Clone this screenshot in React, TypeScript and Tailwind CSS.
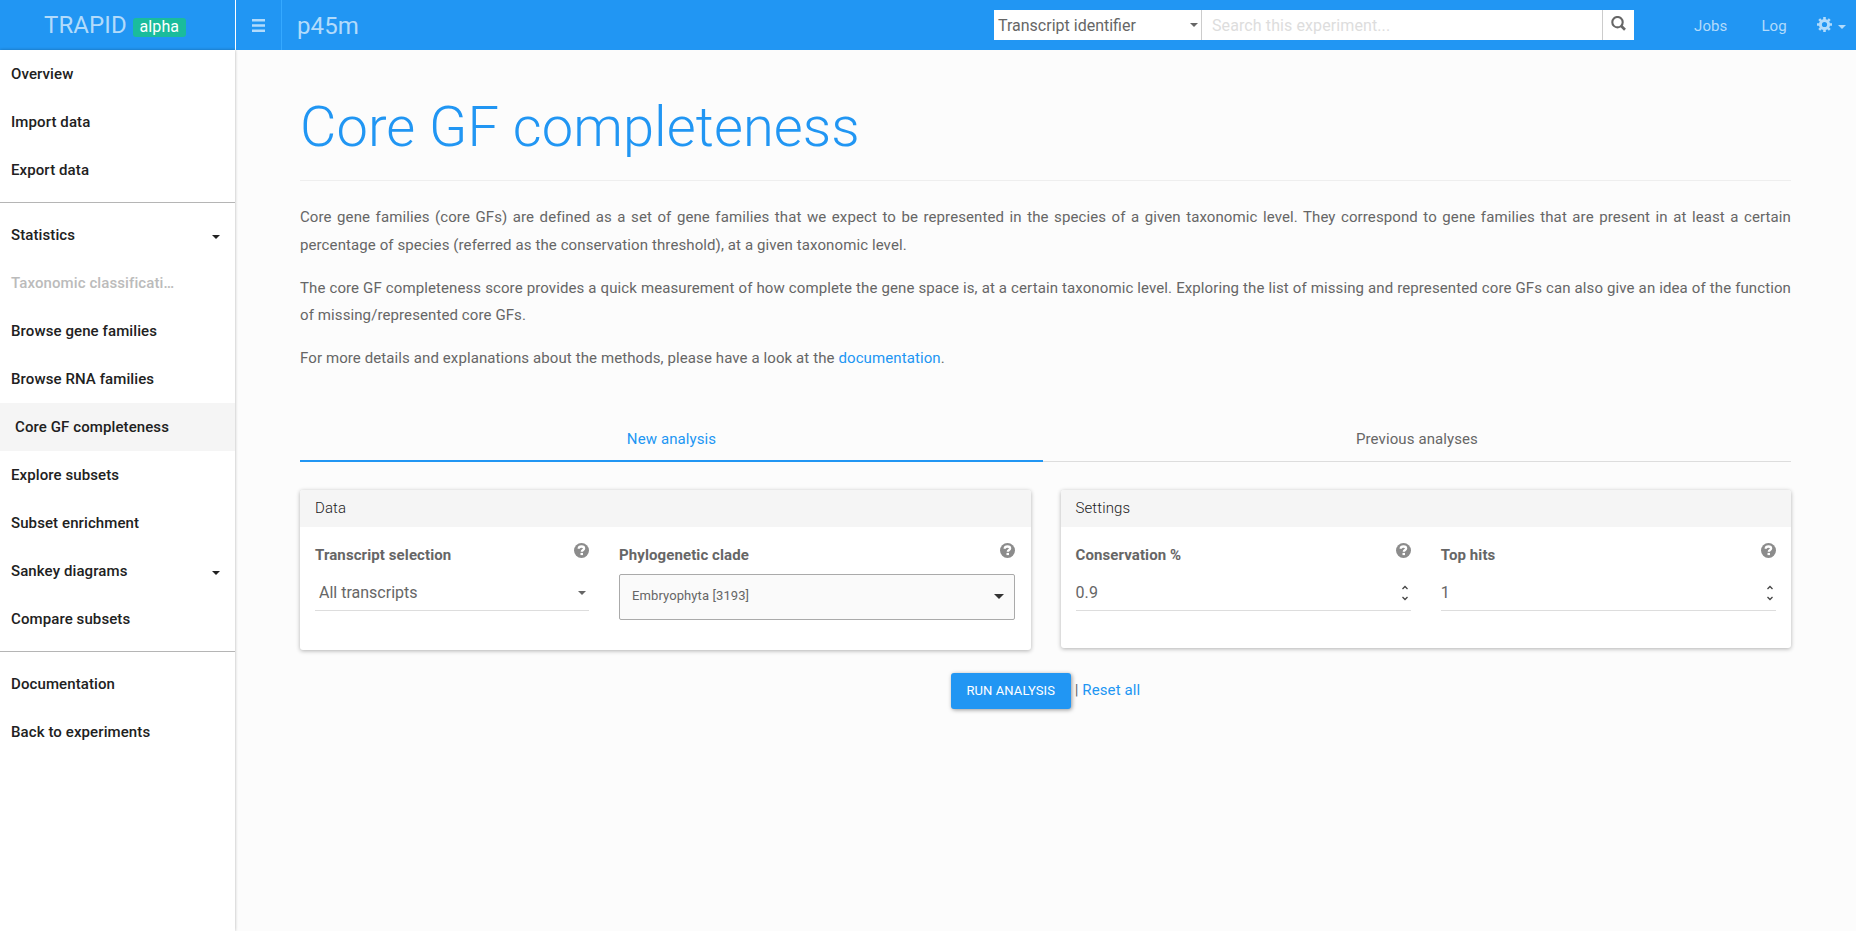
import type { ReactNode } from "react";

type Item = { label: string; caret?: boolean; active?: boolean; disabled?: boolean };

const groups: Item[][] = [
  [{ label: "Overview" }, { label: "Import data" }, { label: "Export data" }],
  [
    { label: "Statistics", caret: true },
    { label: "Taxonomic classificati…", disabled: true },
    { label: "Browse gene families" },
    { label: "Browse RNA families" },
    { label: "Core GF completeness", active: true },
    { label: "Explore subsets" },
    { label: "Subset enrichment" },
    { label: "Sankey diagrams", caret: true },
    { label: "Compare subsets" },
  ],
  [{ label: "Documentation" }, { label: "Back to experiments" }],
];

function Caret({ className }: { className: string }) {
  return (
    <svg viewBox="0 0 8 4" className={className} fill="currentColor">
      <path d="M0 0h8L4 4z" />
    </svg>
  );
}

function Help() {
  return (
    <svg viewBox="0 0 15 15" className="mt-[3px] size-[15px] text-[#8c8c8c]">
      <circle cx="7.5" cy="7.5" r="7.5" fill="currentColor" />
      <path d="M4.700 5.700C4.800 3.900 6 3.500 7.500 3.500c1.600 0 2.600.7 2.600 1.900 0 1.600-2.300 1.500-2.300 3.300" fill="none" stroke="#fff" strokeWidth="2.300" />
      <rect x="6.500" y="9.900" width="2.500" height="2.200" fill="#fff" />
    </svg>
  );
}

function Spinner() {
  return (
    <svg viewBox="0 0 6 16" className="mr-[3px] h-4 w-1.5" fill="none" stroke="#444" strokeWidth="1.300">
      <path d="M.5 4 3 1.500 5.500 4M.5 12 3 14.500 5.500 12" />
    </svg>
  );
}

function Label({ children }: { children: ReactNode }) {
  return (
    <div className="flex h-[39px] justify-between">
      <span className="mt-[1px] text-[15px] leading-[28px] font-bold">{children}</span>
      <Help />
    </div>
  );
}

function Card({ title, className, children }: { title: string; className: string; children: ReactNode }) {
  return (
    <section className={`overflow-hidden rounded-[3px] bg-white shadow-[0_1px_4px_rgba(0,0,0,0.3)] ${className}`}>
      <h2 className="h-[37px] bg-[#f5f5f5] px-[15px] text-[15px] leading-[37px] font-light text-[#212121]">{title}</h2>
      <div className="flex px-[15px] pt-[13px]">{children}</div>
    </section>
  );
}

export default function App() {
  return (
    <div className="flex h-[931px] w-full flex-col overflow-hidden bg-[#fcfcfc] font-['Roboto',sans-serif] text-[15px] tracking-[0.1px] text-[#666]">
      <header className="flex h-[50px] shrink-0 bg-[#2196f3] text-[#b2dbfb]">
        <div className="flex w-[236px] items-center border-r border-white pl-[44px]">
          <span className="text-[24px] tracking-[0.1px]">TRAPID</span>
          <span className="relative top-[2px] ml-[6px] flex h-[19px] w-[53px] items-center justify-center rounded-[3px] bg-[#1abc9c] text-[16px] text-white">alpha</span>
        </div>
        <div className="flex w-[46px] items-center justify-center border-r border-[#35a9ff]">
          <svg viewBox="0 0 13 13" className="size-[13px]" fill="currentColor">
            <path d="M0 0h13v2.500H0zM0 5.200h13v2.500H0zM0 10.400h13v2.500H0z" />
          </svg>
        </div>
        <div className="ml-[15px] text-[24px] leading-[52px] tracking-[0.1px]">p45m</div>
        <div className="mt-[10px] ml-auto flex h-[30px] w-[640px] bg-white text-[16px]">
          <div className="flex w-[208px] items-center justify-between border-r border-[#ccc] pr-[3px] pl-1 tracking-normal text-[#666]">
            <span className="relative top-[1px]">Transcript identifier</span>
            <Caret className="h-1 w-2" />
          </div>
          <div className="flex flex-1 items-center pl-[10px] text-[#ddd]">
            <span className="relative top-[1px]">Search this experiment...</span>
          </div>
          <div className="flex w-[32px] justify-center border-l border-[#ccc] pt-[6px] text-[#666]">
            <svg viewBox="0 0 15 15" className="size-[15px]" fill="none" stroke="currentColor">
              <circle cx="6.500" cy="6.200" r="5.200" strokeWidth="2.100" />
              <path d="m10 9.800 4 4" strokeWidth="2.700" />
            </svg>
          </div>
        </div>
        <nav className="flex w-[222px] items-center pl-[60px]">
          <span className="relative top-[1px]">Jobs</span>
          <span className="relative top-[1px] ml-[34px]">Log</span>
          <svg viewBox="0 0 15 15" className="relative -top-[1px] ml-[30px] size-[15px]" fill="none" stroke="currentColor">
            <circle cx="7.500" cy="7.500" r="4.100" strokeWidth="3" />
            <path d="M7.500 0v3M7.500 12v3M0 7.500h3M12 7.500h3M2.200 2.200l2 2M10.800 10.800l2 2M12.800 2.200l-2 2M4.200 10.800l-2 2" strokeWidth="2.600" />
          </svg>
          <Caret className="relative top-[2px] ml-[6px] h-1 w-2" />
        </nav>
      </header>
      <div className="flex min-h-0 flex-1">
        <aside className="w-[235px] shrink-0 bg-white text-[#212121] shadow-[0_0_3px_rgba(0,0,0,0.3)]">
          {groups.map((g, i) => (
            <div key={i} className={i > 0 ? "mt-2 border-t border-[#b5b5b5] pt-2" : ""}>
              {g.map((it) => (
                <div
                  key={it.label}
                  className={`flex h-12 items-center justify-between pr-[15px] font-medium ${it.active ? "bg-[#f5f5f5] pl-[15px]" : "pl-[11px]"} ${it.disabled ? "text-[#bbb]" : ""}`}
                >
                  <span>{it.label}</span>
                  {it.caret && <Caret className="relative top-[2px] h-1 w-2" />}
                </div>
              ))}
            </div>
          ))}
        </aside>
        <main className="flex-1 pr-[65px] pl-[65px]">
          <h1 className="h-[131px] border-b border-[#eee] pt-[46px] text-[56px] leading-[62px] font-light tracking-[0.080px] text-[#2196f3]">Core GF completeness</h1>
          <div className="mt-[23.300px] space-y-[15px] text-justify leading-[27.700px]">
            <p>Core gene families (core GFs) are defined as a set of gene families that we expect to be represented in the species of a given taxonomic level. They correspond to gene families that are present in at least a certain percentage of species (referred as the conservation threshold), at a given taxonomic level.</p>
            <p>The core GF completeness score provides a quick measurement of how complete the gene space is, at a certain taxonomic level. Exploring the list of missing and represented core GFs can also give an idea of the function of missing/represented core GFs.</p>
            <p>For more details and explanations about the methods, please have a look at the <a className="text-[#2196f3]">documentation</a>.</p>
          </div>
          <div className="mt-[42.700px] flex h-[46px] text-center leading-[46px]">
            <div className="w-[743px] border-b-2 border-[#2196f3] text-[#2196f3]">New analysis</div>
            <div className="flex-1 border-b border-[#ddd]">Previous analyses</div>
          </div>
          <div className="mt-7 flex items-start gap-[30px]">
            <Card title="Data" className="h-[160px] flex-1">
              <div className="w-[274px]">
                <Label>Transcript selection</Label>
                <div className="flex h-[32px] items-center justify-between border-b border-[#ddd] pr-[3px] pb-[2px] pl-1 text-[16px] tracking-normal">
                  <span>All transcripts</span>
                  <Caret className="h-1 w-2" />
                </div>
              </div>
              <div className="mr-[1px] ml-[30px] flex-1">
                <Label>Phylogenetic clade</Label>
                <div className="-mt-[5px] flex h-[46px] items-center justify-between rounded-[2px] border border-[#aaa] bg-[#fafafa] pr-[10px] pl-3 text-[13px]">
                  <span className="relative -top-[1px]">Embryophyta [3193]</span>
                  <Caret className="h-[5px] w-[10px] text-[#333]" />
                </div>
              </div>
            </Card>
            <Card title="Settings" className="h-[158px] flex-1">
              {[["Conservation %", "0.9"], ["Top hits", "1"]].map(([l, v], i) => (
                <div key={l} className={i ? "ml-[30px] flex-1" : "flex-1"}>
                  <Label>{l}</Label>
                  <div className="flex h-[32px] items-center justify-between border-b border-[#ddd] pb-[2px] text-[16px]">
                    <span>{v}</span>
                    <Spinner />
                  </div>
                </div>
              ))}
            </Card>
          </div>
          <div className="mt-[23px] flex items-center justify-center">
            <button className="h-9 w-[120px] rounded-[3px] bg-[#2196f3] text-[13px] text-white shadow-[1px_1px_4px_rgba(0,0,0,0.4)]">RUN ANALYSIS</button>
            <span className="ml-1">| <a className="text-[#2196f3]">Reset all</a></span>
          </div>
        </main>
      </div>
    </div>
  );
}
